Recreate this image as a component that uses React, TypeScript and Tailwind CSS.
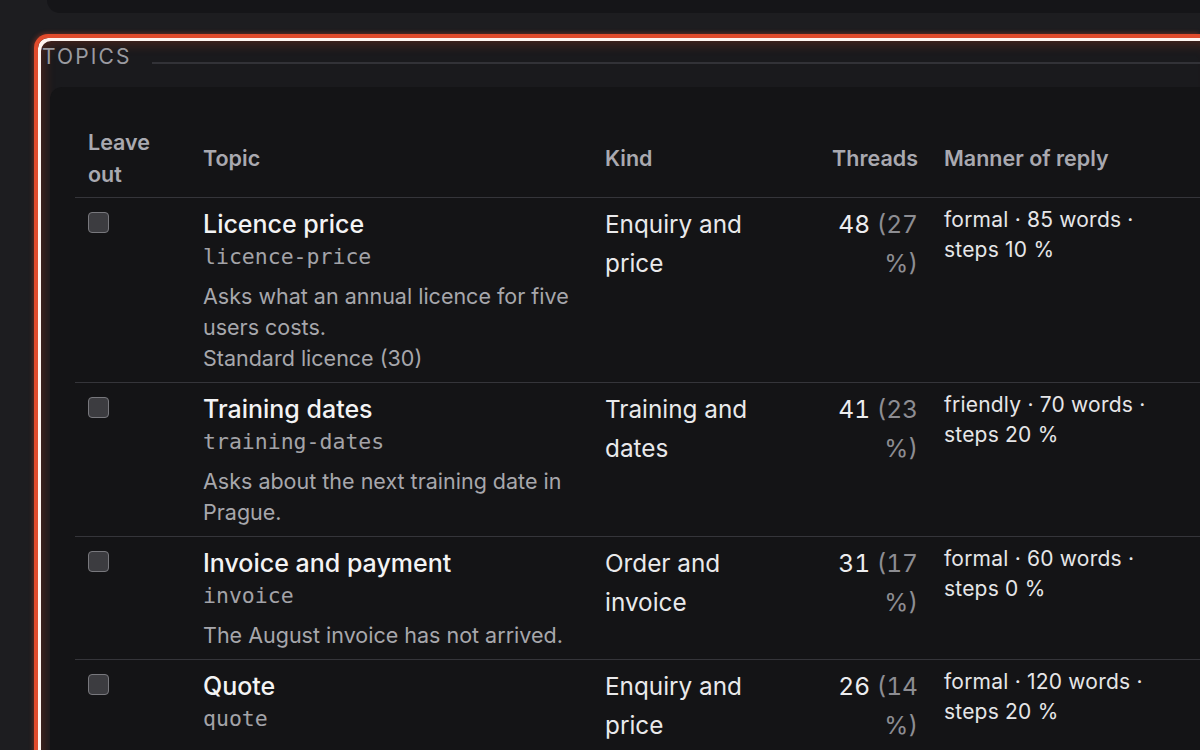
import React from "react";

type Row = {
  title: string;
  slug: string;
  desc: string[];
  kind: string;
  threads: number;
  pct: number;
  manner: string;
};

const rows: Row[] = [
  {
    title: "Licence price",
    slug: "licence-price",
    desc: ["Asks what an annual licence for five users costs.", "Standard licence (30)"],
    kind: "Enquiry and price",
    threads: 48,
    pct: 27,
    manner: "formal · 85 words · steps 10 %",
  },
  {
    title: "Training dates",
    slug: "training-dates",
    desc: ["Asks about the next training date in Prague."],
    kind: "Training and dates",
    threads: 41,
    pct: 23,
    manner: "friendly · 70 words · steps 20 %",
  },
  {
    title: "Invoice and payment",
    slug: "invoice",
    desc: ["The August invoice has not arrived."],
    kind: "Order and invoice",
    threads: 31,
    pct: 17,
    manner: "formal · 60 words · steps 0 %",
  },
  {
    title: "Quote",
    slug: "quote",
    desc: [],
    kind: "Enquiry and price",
    threads: 26,
    pct: 14,
    manner: "formal · 120 words · steps 20 %",
  },
];

export default function App() {
  return (
    <div className="h-[750px] w-[1200px] overflow-hidden bg-[#1d1d20] font-['Inter',sans-serif]">
      <div className="ml-[47px] h-[13px] rounded-bl-[16px] bg-[#151518]" />
      <div className="ml-[34px] mt-[21px] h-[760px] rounded-tl-[14px] border-[4px] border-r-0 border-b-0 border-[#e14b2c] bg-[#1a1a1d] pl-[4px] pt-[8px] shadow-[inset_3px_3px_0_0_#fff4f0,inset_8px_8px_12px_-2px_rgba(200,60,30,0.28),-1px_-1px_4px_rgba(225,75,44,0.35)]">
        <div className="flex items-start">
          <span className="text-[21px] leading-[22px] tracking-[0.1em] text-[#9b9ba1]">TOPICS</span>
          <div className="ml-[21px] mt-[16px] h-[2px] flex-1 bg-[#323237]" />
        </div>
        <div className="ml-[8px] mt-[19px] h-[700px] rounded-tl-[12px] bg-[#141416] pl-[25px] pt-[30px]">
          <table className="w-[1160px] table-fixed border-collapse">
            <colgroup>
              <col className="w-[115px]" />
              <col className="w-[402px]" />
              <col className="w-[211px]" />
              <col className="w-[128px]" />
              <col />
            </colgroup>
            <thead>
              <tr className="border-b border-[#35353a]">
                {["Leave out", "Topic", "Kind", "Threads", "Manner of reply"].map((h, i) => (
                  <th
                    key={h}
                    className={
                      "px-[13px] pb-[7px] pt-[9px] align-middle text-[21.5px] font-semibold leading-[32px] text-[#a9a9b0] " +
                      (i === 3 ? "text-right" : "text-left")
                    }
                  >
                    {h}
                  </th>
                ))}
              </tr>
            </thead>
            <tbody>
              {rows.map((r) => (
                <tr key={r.slug} className="border-b border-[#35353a]">
                  <td className="px-[13px] pb-[8px] pt-[14px] align-top">
                    <div className="h-[21px] w-[21px] rounded-[4px] border-[1.5px] border-[#78787d] bg-[#3c3c40]" />
                  </td>
                  <td className="px-[13px] pb-[8px] pt-[9px] align-top">
                    <div className="text-[25px] font-medium leading-[34px] text-[#f3f3f4]">{r.title}</div>
                    <div className="font-['DejaVu_Sans_Mono',monospace] text-[21.5px] leading-[31px] text-[#a3a3a8]">
                      {r.slug}
                    </div>
                    {r.desc.length > 0 && (
                      <div className="mt-[9px] text-[21.5px] leading-[31px] text-[#a7a7ac]">
                        {r.desc.map((d) => (
                          <div key={d}>{d}</div>
                        ))}
                      </div>
                    )}
                  </td>
                  <td className="px-[13px] pb-[8px] pt-[7px] align-top text-[24.3px] leading-[39px] text-[#e9e9eb]">
                    {r.kind}
                  </td>
                  <td className="px-[13px] pb-[8px] pt-[7px] text-right align-top text-[24.5px] leading-[39px] tabular-nums">
                    <span className="text-[#ededef]">{r.threads}</span>{" "}
                    <span className="text-[#8d8d92]">({r.pct} %)</span>
                  </td>
                  <td className="px-[13px] pb-[8px] pt-[7px] align-top">
                    <div className="max-w-[222px] text-[21px] leading-[30px] tracking-[0.01em] text-[#e6e6e8]">
                      {r.manner}
                    </div>
                  </td>
                </tr>
              ))}
            </tbody>
          </table>
        </div>
      </div>
    </div>
  );
}
